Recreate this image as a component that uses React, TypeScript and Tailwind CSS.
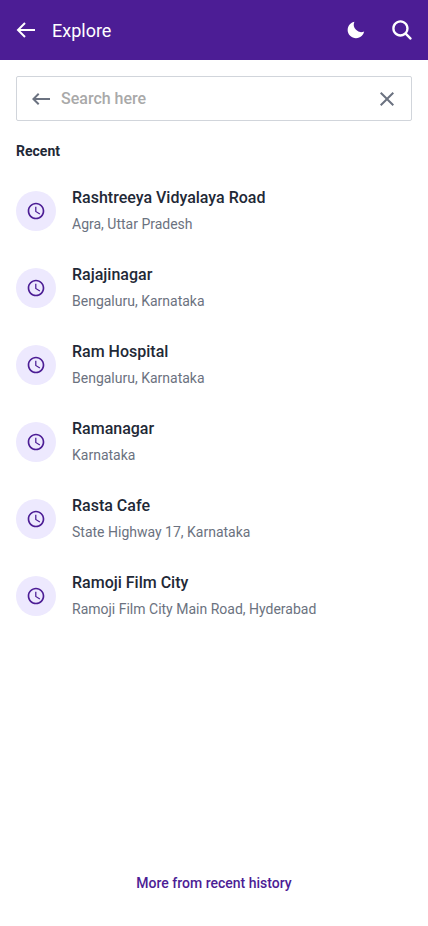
import { BiArrowBack, BiSolidMoon } from 'react-icons/bi';
import { IoSearch } from 'react-icons/io5';
import { MdAccessTime, MdClose, MdKeyboardBackspace } from 'react-icons/md';

const items = [
  ['Rashtreeya Vidyalaya Road', 'Agra, Uttar Pradesh'],
  ['Rajajinagar', 'Bengaluru, Karnataka'],
  ['Ram Hospital', 'Bengaluru, Karnataka'],
  ['Ramanagar', 'Karnataka'],
  ['Rasta Cafe', 'State Highway 17, Karnataka'],
  ['Ramoji Film City', 'Ramoji Film City Main Road, Hyderabad'],
];

export default function App() {
  return (
    <div className="flex h-[926px] w-full flex-col bg-white font-['Roboto',sans-serif]">
      <header className="flex h-[60px] shrink-0 items-center bg-[#4c1d95] px-3.5 text-white">
        <BiArrowBack className="size-6" />
        <h1 className="ml-3.5 pt-0.5 text-lg">Explore</h1>
        <BiSolidMoon className="ml-auto size-5" />
        <IoSearch className="ml-6 size-6" />
      </header>
      <main className="flex flex-1 flex-col px-4 pt-4">
        <div className="flex h-[45px] items-center rounded-xs border border-[#d1d5db] px-3 text-[#6b7280]">
          <MdKeyboardBackspace className="size-6" />
          <input className="ml-2 flex-1 font-medium outline-none placeholder:text-[#a9a9a9]" placeholder="Search here" />
          <MdClose className="size-6" />
        </div>
        <h2 className="mt-5 text-sm font-bold text-[#1f2937]">Recent</h2>
        <ul className="mt-[11px]">
          {items.map(([name, place]) => (
            <li key={name} className="flex h-[77px] items-center">
              <div className="flex size-10 items-center justify-center rounded-full bg-[#ede9fe] text-[#4c1d95]">
                <MdAccessTime className="size-5" />
              </div>
              <div className="ml-4 pb-0.5">
                <p className="text-base font-medium text-[#1f2937]">{name}</p>
                <p className="mt-1 text-sm text-[#6b7280]">{place}</p>
              </div>
            </li>
          ))}
        </ul>
        <button className="mt-auto mb-[33px] text-sm font-medium text-[#4c1d95]">More from recent history</button>
      </main>
    </div>
  );
}
